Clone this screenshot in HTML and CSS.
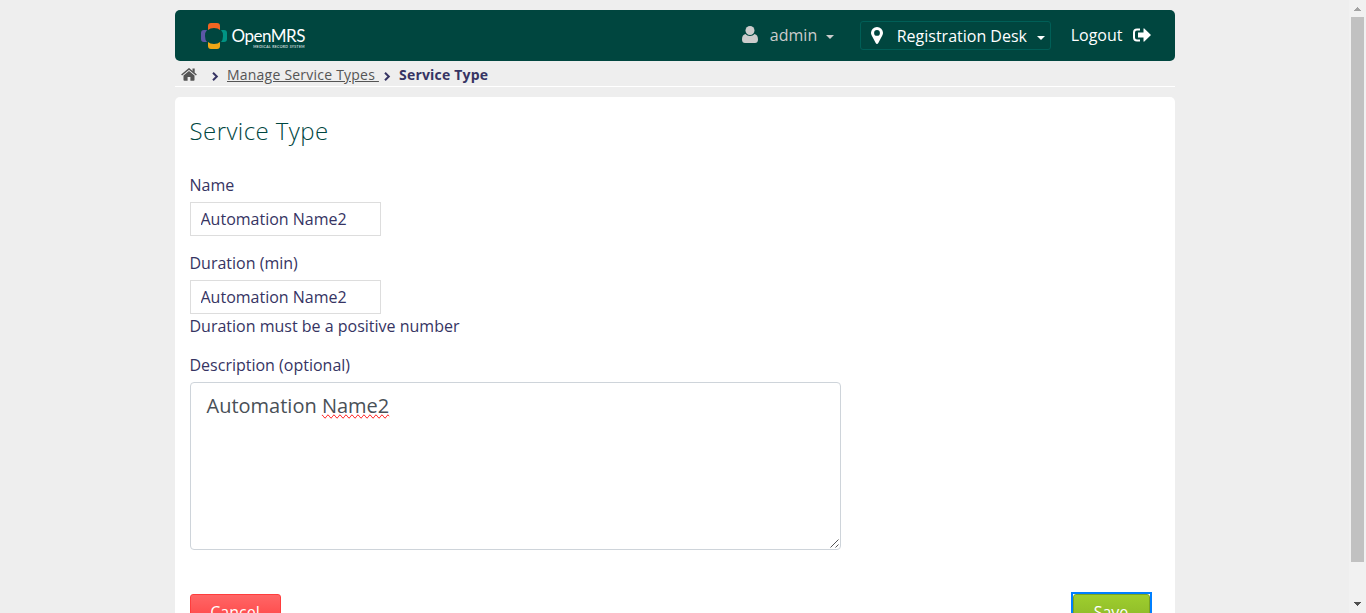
FILE: index.html
```html
<!DOCTYPE html>
<html lang="en">
<head>
<meta charset="utf-8">
<title>Service Type</title>
<link rel="stylesheet" href="styles.css">
</head>
<body>
<div class="window">
  <div class="page">
    <header class="topbar">
      <a class="logo">
        <svg class="logo-mark" width="26" height="26" viewBox="0 0 26 26">
          <path fill="#5b57a6" d="M6 7H3Q0 7 0 10v6q0 3 3 3h3q-2-2-2-6t2-6z"/>
          <path fill="#009384" d="M20 7h3q3 0 3 3v6q0 3-3 3h-3q2-2 2-6t-2-6z"/>
          <path fill="#f26522" d="M7 7V3q0-3 3-3h6q3 0 3 3v4q-2-2-6-2T7 7z"/>
          <path fill="#eea616" d="M7 19v4q0 3 3 3h6q3 0 3-3v-4q-2 2-6 2t-6-2z"/>
        </svg>
        <span class="logo-text"><span class="logo-name">OpenMRS</span><span class="logo-tag">MEDICAL RECORD SYSTEM</span></span>
      </a>
      <nav class="account">
        <a class="user">
          <svg width="16" height="17" viewBox="0 0 16 17"><path fill="#ccc" d="M3.500 8C1 8.500 0 10.500 0 13.500 0 16 1.200 17 3 17h10c1.800 0 3-1 3-3.500 0-3-1-5-3.500-5.500-1 1.200-2.700 2-4.500 2S4.500 9.200 3.500 8z"/><circle cx="8" cy="4.500" r="4.500" fill="#ccc"/></svg>
          <span class="user-name">admin</span>
          <i class="caret"></i>
        </a>
        <a class="location">
          <svg width="12" height="17" viewBox="0 0 12 17"><path fill="#fff" fill-rule="evenodd" d="M6 0a6 5.800 0 0 0-6 5.800c0 1 .2 1.800.6 2.500L4.700 16q.5 1 1.300 1t1.300-1l4.100-7.700c.4-.7.600-1.500.600-2.500A6 5.800 0 0 0 6 0zm0 3a2.900 2.900 0 1 1 0 5.800A2.900 2.900 0 0 1 6 3z"/></svg>
          <span class="location-name">Registration Desk</span>
          <i class="caret"></i>
        </a>
        <a class="logout">
          <span>Logout</span>
          <svg width="18" height="15" viewBox="0 0 18 15"><path fill="none" stroke="#fff" stroke-width="2" d="M7 1.500H4Q1 1.500 1 4.500v5q0 3 3 3h3"/><path fill="#fff" d="M5 4.500h5.500V.8q0-.8.800-.3L18 7l-6.700 6.500q-.8.500-.8-.3V9.500H5z"/></svg>
        </a>
      </nav>
    </header>
    <ul class="crumbs">
      <li class="crumb-home"><svg width="16" height="13" viewBox="0 0 16 13"><path fill="#555" d="M8 3l5.500 4.600V12q0 .8-.8.800H9.400V9H6.600v3.800H3.300q-.8 0-.8-.8V7.600z"/><path fill="none" stroke="#555" stroke-width="1.500" d="M.6 7L8 .9 15.400 7"/><path fill="#555" d="M11.500.5h2.200v4.500l-2.200-1.800z"/></svg></li>
      <li class="crumb-sep"><svg width="7" height="9" viewBox="0 0 7 9"><path fill="none" stroke="#363463" stroke-width="2" d="M1 .8L4.800 4.500 1 8.200"/></svg></li>
      <li class="crumb-link"><a>Manage Service Types </a></li>
      <li class="crumb-sep-next"><svg width="7" height="9" viewBox="0 0 7 9"><path fill="none" stroke="#363463" stroke-width="2" d="M1 .8L4.800 4.500 1 8.200"/></svg></li>
      <li class="crumb-current">Service Type</li>
    </ul>
    <main class="panel">
      <h2 class="title">Service Type</h2>
      <form class="form">
        <div class="field">
          <label class="label" for="name">Name</label>
          <input class="input" id="name" type="text" value="Automation Name2">
        </div>
        <div class="field">
          <label class="label" for="duration">Duration (min)</label>
          <input class="input" id="duration" type="text" value="Automation Name2">
          <span class="error">Duration must be a positive number</span>
        </div>
        <div class="field">
          <label class="label">Description (optional)</label>
          <div class="description">Automation <span class="misspelled">Name2</span>
            <svg class="grip" width="9" height="9" viewBox="0 0 9 9"><path stroke="#555" stroke-width="1" d="M.5 8.500l8-8M5.500 8.500l3-3"/></svg>
          </div>
        </div>
        <div class="actions">
          <button class="button cancel" type="button">Cancel</button>
          <div class="focus-ring"><button class="button save" type="button">Save</button></div>
        </div>
      </form>
    </main>
  </div>
  <div class="scrollbar">
    <svg width="7" height="4" viewBox="0 0 7 4"><path fill="#a3a3a3" d="M3 0h1v1h1v1h1v1h1v1H0V3h1V2h1V1h1z"/></svg>
    <div class="thumb"></div>
    <svg class="arrow-down" width="7" height="4" viewBox="0 0 7 4"><path fill="#505050" d="M3 4h1V3h1V2h1V1h1V0H0v1h1v1h1v1h1z"/></svg>
  </div>
</div>
</body>
</html>
```
FILE: styles.css
```css
* { box-sizing: border-box; }
body {
  margin: 0;
  height: 613px;
  overflow: hidden;
  background: #eee;
  color: #363463;
  font: 400 16px/24px "Open Sans", sans-serif;
}
svg { display: block; flex: none; }
.window { display: flex; justify-content: space-between; height: 613px; overflow: hidden; }
.page { width: 1000px; margin-left: 174.5px; padding-top: 10px; }

.topbar {
  display: flex;
  justify-content: space-between;
  height: 51px;
  padding: 0 24px 0 26px;
  border-radius: 5px;
  background: #00463f;
  color: #fff;
}
.logo { display: flex; align-items: flex-start; padding-top: 13px; }
.logo-text { display: flex; flex-direction: column; margin-left: 5px; padding-top: 4px; }
.logo-name { font: 400 17px/18px Lato, sans-serif; letter-spacing: -0.5px; }
.logo-tag { align-self: flex-end; font: 400 3.500px/4px Lato, sans-serif; letter-spacing: 0.35px; }
.account { display: flex; align-items: flex-start; }
.caret {
  border: 4px solid transparent;
  border-top-color: currentColor;
  border-bottom: 0;
}
.user { display: flex; align-items: center; margin: 13px 25.5px 0 0; color: #ccc; }
.user svg { margin-top: -2px; }
.user-name { margin: 0 9px 0 12px; }
.user .caret { margin-top: 3px; }
.location {
  display: flex;
  align-items: center;
  width: 191px;
  height: 29px;
  margin: 11px 20px 0 0;
  padding-left: 10px;
  border: 1px solid #005f57;
  border-radius: 3px;
}
.location-name { width: 131px; margin: 0 9px 0 14px; white-space: nowrap; }
.location .caret { margin-top: 4px; }
.logout { display: flex; align-items: center; gap: 10px; margin-top: 13px; }

.crumbs {
  display: flex;
  height: 26px;
  margin: 0;
  padding: 2px 0 0 6.5px;
  border-bottom: 1px solid #fff;
  list-style: none;
  font-size: 14px;
}
.crumb-home { width: 31px; padding-top: 5px; }
.crumb-sep { width: 15px; padding-top: 9px; }
.crumb-link { width: 152px; color: #555; letter-spacing: 0.22px; white-space: pre; text-decoration: underline; }
.crumb-sep-next { width: 20px; padding: 9px 0 0 5px; }
.crumb-current { font-weight: 700; letter-spacing: 0.2px; white-space: nowrap; }

.panel {
  height: 560px;
  margin-top: 10px;
  padding: 19px 15px;
  border-radius: 5px;
  background: #fff;
}
.title { margin: 0 0 40px; color: #00463f; font-size: 24px; font-weight: 300; letter-spacing: 0.43px; line-height: 29px; }
.form { margin: 0; }
.field { display: flex; flex-direction: column; align-items: flex-start; margin-bottom: 15px; }
.label { margin: -12px 0 5px; }
.field + .field .label { margin-top: 0; }
.input {
  width: 191px;
  height: 34px;
  padding: 0 10px;
  border: 1px solid #ddd;
  background: #fff;
  color: #363463;
  font: inherit;
}
.description {
  display: flex;
  position: relative;
  width: 651px;
  height: 168px;
  padding: 8px 16px;
  border: 1px solid #ced4da;
  border-radius: 4px;
  color: #495057;
  font-size: 20px;
  line-height: 30px;
  white-space: pre;
}
.misspelled { text-decoration: spelling-error; }
.grip { position: absolute; right: 1px; bottom: 1px; }
.actions { display: flex; justify-content: space-between; padding: 27px 8px 0 0; }
.button { height: 36px; padding: 0; border: 1px solid; border-radius: 3px; color: #fff; font: 400 16px/24px "Open Sans", sans-serif; }
.cancel { width: 91px; margin-top: 2px; border-color: #ff3d3d; background: linear-gradient(#ff6666, #ff3d3d); }
.focus-ring { border: 2px solid #007fff; }
.save { display: block; width: 77px; border-color: #7aa323; background: linear-gradient(#9ece2e, #88b226); }

.scrollbar {
  display: flex;
  flex-direction: column;
  align-items: center;
  width: 17px;
  padding-top: 7px;
  background: #f1f1f1;
}
.thumb { width: 13px; height: 545px; margin-top: 6px; background: #c1c1c1; }
.arrow-down { margin-top: 40px; }
```
